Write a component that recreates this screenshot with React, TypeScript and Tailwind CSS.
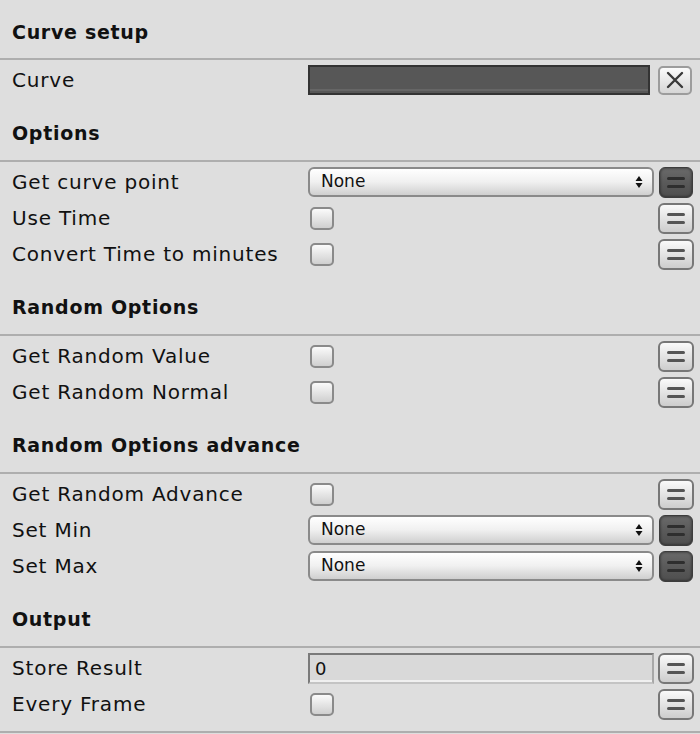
import React from "react";

type Field =
  | { kind: "curve" }
  | { kind: "popup"; value: string }
  | { kind: "check" }
  | { kind: "number"; value: string };

type Row = { label: string; field: Field };
type Section = { title: string; rows: Row[]; first?: boolean };

const sections: Section[] = [
  { title: "Curve setup", first: true, rows: [{ label: "Curve", field: { kind: "curve" } }] },
  {
    title: "Options",
    rows: [
      { label: "Get curve point", field: { kind: "popup", value: "None" } },
      { label: "Use Time", field: { kind: "check" } },
      { label: "Convert Time to minutes", field: { kind: "check" } },
    ],
  },
  {
    title: "Random Options",
    rows: [
      { label: "Get Random Value", field: { kind: "check" } },
      { label: "Get Random Normal", field: { kind: "check" } },
    ],
  },
  {
    title: "Random Options advance",
    rows: [
      { label: "Get Random Advance", field: { kind: "check" } },
      { label: "Set Min", field: { kind: "popup", value: "None" } },
      { label: "Set Max", field: { kind: "popup", value: "None" } },
    ],
  },
  {
    title: "Output",
    rows: [
      { label: "Store Result", field: { kind: "number", value: "0" } },
      { label: "Every Frame", field: { kind: "check" } },
    ],
  },
];

function Bars({ dark }: { dark?: boolean }) {
  const c = dark ? "bg-[#2e2e2e]" : "bg-[#555]";
  return (
    <div className="flex flex-col gap-[5px] items-center">
      <div className={`w-[18px] h-[3px] rounded-full ${c}`} />
      <div className={`w-[18px] h-[3px] rounded-full ${c}`} />
    </div>
  );
}

function VarButton({ dark }: { dark?: boolean }) {
  if (dark) {
    return (
      <div className="w-[34px] h-[31px] rounded-[6px] border border-[#3c3c3c] bg-gradient-to-b from-[#6a6a6a] via-[#5a5a5a] to-[#4e4e4e] shadow-[inset_0_0_3px_rgba(0,0,0,0.6)] flex items-center justify-center">
        <Bars dark />
      </div>
    );
  }
  return (
    <div className="w-[36px] h-[31px] rounded-[6px] border-2 border-[#777] bg-gradient-to-b from-[#fafafa] to-[#cdcdcd] flex items-center justify-center">
      <Bars />
    </div>
  );
}

function Control({ field }: { field: Field }) {
  if (field.kind === "curve") {
    return (
      <div className="flex items-center">
        <div className="w-[342px] h-[30px] border-2 border-[#333] bg-[#575757] flex flex-col justify-end">
          <div className="h-[2px] mb-[2px] bg-[#666]" />
        </div>
        <div className="ml-[8px] w-[34px] h-[29px] rounded-[5px] border-2 border-[#9c9c9c] bg-gradient-to-b from-[#fbfbfb] to-[#d6d6d6] flex items-center justify-center">
          <svg width="20" height="20" viewBox="0 0 20 20">
            <path d="M3 3 L17 17 M17 3 L3 17" stroke="#3a3a3a" strokeWidth="2.4" strokeLinecap="round" />
          </svg>
        </div>
      </div>
    );
  }
  if (field.kind === "popup") {
    return (
      <div className="flex items-center">
        <div className="w-[346px] h-[30px] rounded-[6px] border-2 border-[#8a8a8a] bg-gradient-to-b from-[#ffffff] via-[#f0f0f0] to-[#cfcfcf] flex items-center pl-[11px] pr-[9px]">
          <span className="text-[17px] text-[#111] flex-1">{field.value}</span>
          <svg width="8" height="14" viewBox="0 0 8 14">
            <path d="M4 1 L7.5 6 L0.5 6 Z M0.5 8 L7.5 8 L4 13 Z" fill="#111" />
          </svg>
        </div>
        <div className="ml-[5px]">
          <VarButton dark />
        </div>
      </div>
    );
  }
  if (field.kind === "number") {
    return (
      <div className="flex items-center">
        <div className="w-[346px] h-[31px] border-2 border-[#7a7a7a] border-b-[#c4c4c4] border-r-[#a8a8a8] bg-[#d9d9d9] flex items-center pl-[5px] shadow-[inset_0_-2px_0_#f0f0f0]">
          <span className="text-[18px] text-[#111]">{field.value}</span>
        </div>
        <div className="ml-[4px]">
          <VarButton />
        </div>
      </div>
    );
  }
  return (
    <div className="flex items-center justify-between">
      <div className="ml-[2px] w-[24px] h-[23px] rounded-[5px] border-2 border-[#8a8a8a] bg-gradient-to-b from-[#fbfbfb] to-[#cfcfcf]" />
      <div className="mr-[6px]">
        <VarButton />
      </div>
    </div>
  );
}

export default function App() {
  return (
    <div
      className="w-[700px] h-[734px] bg-[#dedede] text-[#111] overflow-hidden"
      style={{ fontFamily: '"DejaVu Sans", "Liberation Sans", sans-serif' }}
    >
      {sections.map((s, i) => (
        <div key={i}>
          <div className={`${s.first ? "h-[58px] pt-[20px]" : "h-[62px] pt-[23px]"} px-[12px]`}>
            <div className="text-[19px] font-bold leading-[24px] tracking-[0.7px]">{s.title}</div>
          </div>
          <div className="h-[2px] bg-[#aeaeae]" />
          <div className="pt-[2px]">
            {s.rows.map((r, j) => (
              <div key={j} className="h-[36px] flex items-center">
                <div className="w-[308px] pl-[12px] text-[20px] tracking-[0.8px] whitespace-nowrap">{r.label}</div>
                <div className="flex-1">
                  <Control field={r.field} />
                </div>
              </div>
            ))}
          </div>
        </div>
      ))}
      <div className="h-[9px]" />
      <div className="h-[2px] bg-[#aeaeae]" />
    </div>
  );
}
